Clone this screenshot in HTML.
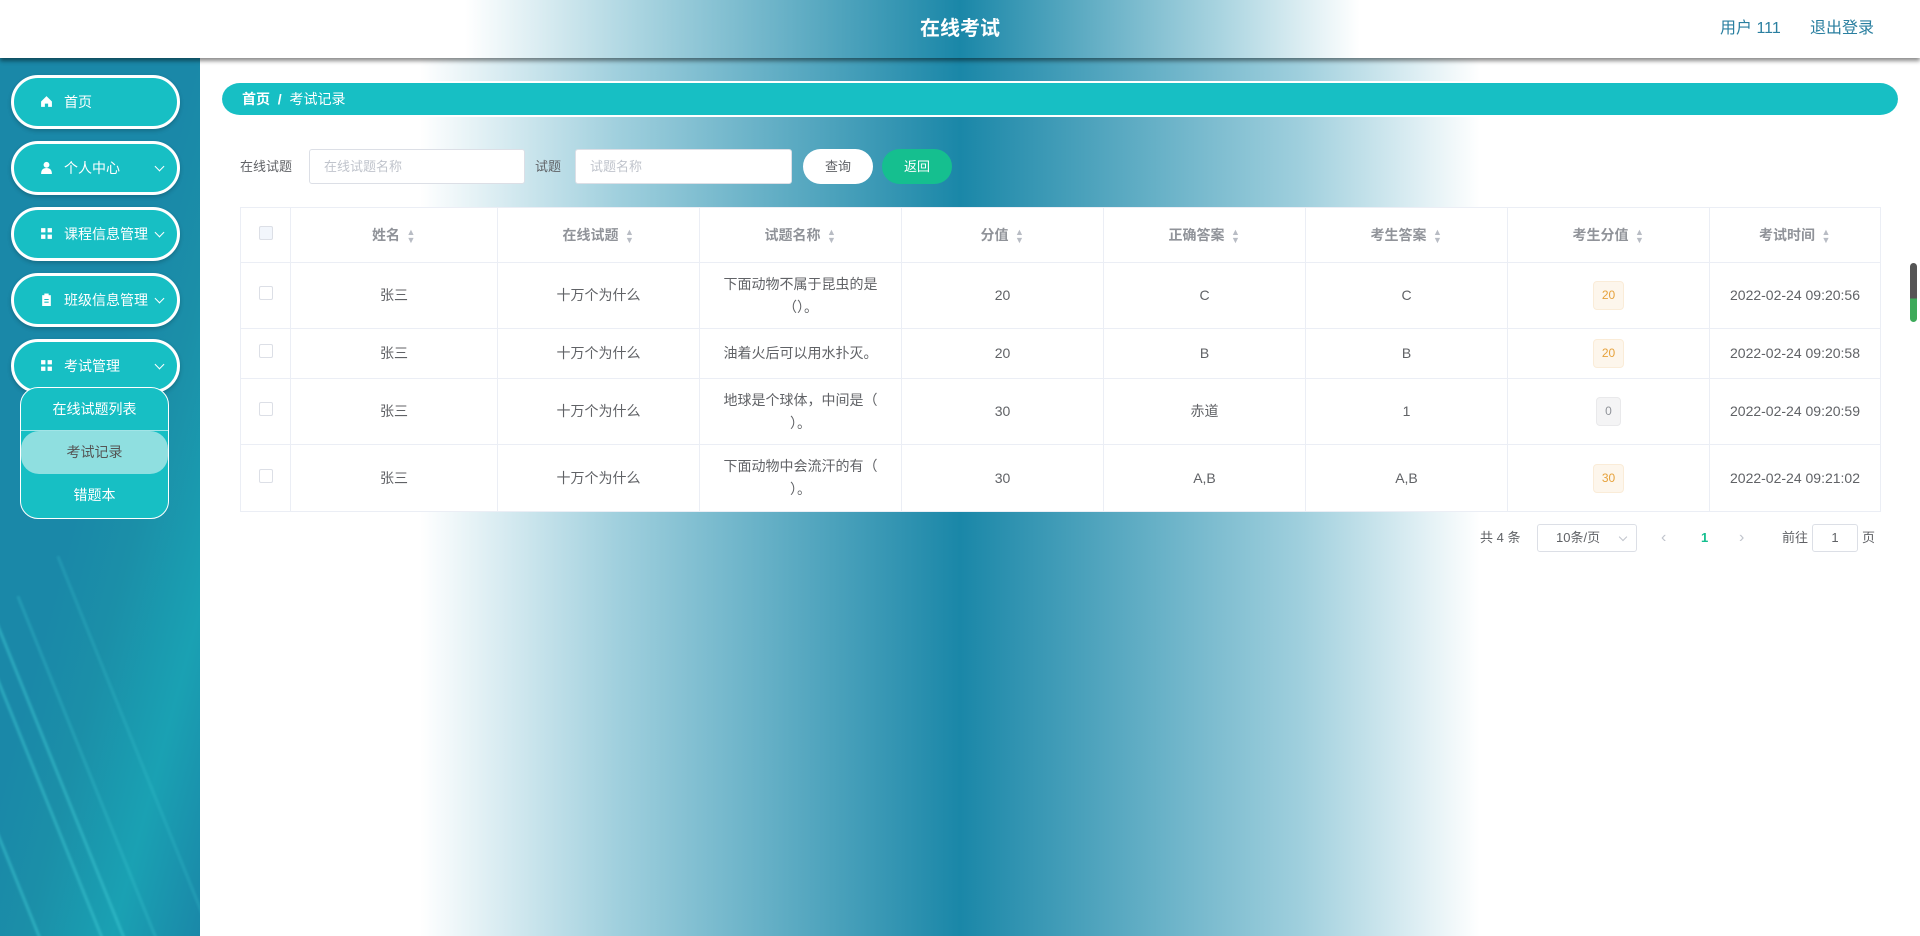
<!DOCTYPE html>
<html><head><meta charset="utf-8"><style>
*{box-sizing:border-box;margin:0;padding:0}
body{width:1920px;height:936px;overflow:hidden;font-family:"Liberation Sans","Noto Sans CJK SC",sans-serif;background:#fff;position:relative}
.grad{background:linear-gradient(to right,#fff 0,#fff 420px,#9fcfdd 620px,#1a87a8 960px,#9fcfdd 1300px,#fff 1480px,#fff 1920px)}
.hgrad{background:linear-gradient(to right,#fff 0,#fff 465px,#a9d4e0 640px,#1a87a8 960px,#a9d4e0 1220px,#fff 1360px,#fff 1920px)}
.header{position:absolute;left:0;top:0;width:1920px;height:58px;box-shadow:0 3px 4px rgba(0,0,0,.45);z-index:5}
.header .t{position:absolute;left:0;width:1920px;top:0;line-height:58px;text-align:center;color:#fff;font-weight:bold;font-size:20px}
.header .u{position:absolute;top:0;line-height:58px;color:#2a7fa0;font-size:16px}
.bg{position:absolute;left:0;top:58px;width:1920px;height:878px}
.side{position:absolute;left:0;top:58px;width:200px;height:878px;background:linear-gradient(105deg,#1a88a8 0,#1a88a8 45%,#1b8fa8 60%,#1aa1b3 80%,#1a88a8 100%);overflow:hidden}
.streak{position:absolute;width:3px;height:500px;background:rgba(60,200,210,.5);transform:rotate(-22deg);filter:blur(1px)}
.mi{position:absolute;left:11px;width:169px;height:54px;border:3px solid #fff;border-radius:28px;background:#17bfc4;color:#fff;font-size:14px;line-height:48px;padding-left:50px;box-shadow:0 2px 4px rgba(0,0,0,.2)}
.mi .ic{position:absolute;left:26px;top:17px;width:13px;height:13px}
.mi .ar{position:absolute;right:14px;top:19px;width:7px;height:7px;border-right:1.5px solid #fff;border-bottom:1.5px solid #fff;transform:rotate(45deg)}
.sub{position:absolute;left:20px;top:387px;width:149px;height:132px;background:#17bfc4;border:1px solid #fff;border-radius:18px;overflow:hidden;color:#fff;font-size:14px;text-align:center}
.sub div{height:43px;line-height:43px}
.crumb{position:absolute;left:222px;top:81px;width:1676px;height:36px;background:#17bfc4;border-radius:18px;border-top:2px solid #fff;border-bottom:2px solid #fff;color:#fff;font-weight:bold;font-size:14px;line-height:32px;padding-left:20px}
.lbl{position:absolute;top:149px;line-height:35px;font-size:13px;color:#606266}
.inp{position:absolute;top:149px;height:35px;background:#fff;border:1px solid #dcdfe6;border-radius:3px;font-size:13px;color:#c0c4cc;line-height:33px;padding-left:14px}
.btn{position:absolute;top:149px;height:35px;width:70px;border-radius:18px;font-size:13px;line-height:35px;text-align:center}
table{position:absolute;left:240px;top:207px;width:1640px;border-collapse:collapse;background:#fff;font-size:14px;color:#606266;table-layout:fixed}
td,th{border:1px solid #ebeef5;text-align:center;padding:0 12px;line-height:23px}
td.q{padding:0 22px}
th{height:55px;color:#909399;font-weight:bold;font-size:14px}
.s{display:inline-block;width:10px;vertical-align:middle;margin-left:6px;color:#b8bcc4;font-size:9px;line-height:8px}
.cb{display:inline-block;width:14px;height:14px;border:1px solid #dcdfe6;border-radius:2px;background:#fff}
.tag{display:inline-block;padding:0 8px;height:29px;line-height:27px;border-radius:4px;font-size:12px;background:#fdf6ec;border:1px solid #faecd8;color:#e6a23c}
.tag.g{background:#f4f4f5;border-color:#e9e9eb;color:#909399}
.pg{position:absolute;top:524px;line-height:28px;font-size:13px;color:#606266}
</style></head><body>
<div class="bg grad"></div>
<div class="header hgrad"><div class="t">在线考试</div><div class="u" style="left:1720px">用户 111</div><div class="u" style="left:1810px">退出登录</div></div>
<div class="side">
<div class="streak" style="left:40px;top:480px"></div><div class="streak" style="left:70px;top:500px"></div><div class="streak" style="left:110px;top:520px;opacity:.6"></div><div class="streak" style="left:10px;top:560px"></div><div class="streak" style="left:150px;top:480px;opacity:.5"></div><div class="streak" style="left:-20px;top:600px"></div>
</div>
<div class="mi" style="top:75px"><svg class="ic" viewBox="0 0 12 12"><path d="M6 1L1 6v5h3.5V8h3v3H11V6z" fill="#fff"/></svg>首页</div>
<div class="mi" style="top:141px"><svg class="ic" viewBox="0 0 12 12"><circle cx="6" cy="3.5" r="2.7" fill="#fff"/><path d="M1 12c0-4 2-5.5 5-5.5S11 8 11 12z" fill="#fff"/></svg>个人中心<span class="ar"></span></div>
<div class="mi" style="top:207px"><svg class="ic" viewBox="0 0 12 12"><path d="M1 1h4v4H1zM7 1h4v4H7zM1 7h4v4H1zM7 7h4v4H7z" fill="#fff"/></svg>课程信息管理<span class="ar"></span></div>
<div class="mi" style="top:273px"><svg class="ic" viewBox="0 0 12 12"><path d="M2 2h8v10H2z" fill="#fff"/><path d="M4 0.5h4v2.5H4z" fill="#fff"/><path d="M4 6h4M4 8.5h4" stroke="#17bfc4"/></svg>班级信息管理<span class="ar"></span></div>
<div class="mi" style="top:339px"><svg class="ic" viewBox="0 0 12 12"><path d="M1 1h4v4H1zM7 1h4v4H7zM1 7h4v4H1zM7 7h4v4H7z" fill="#fff"/></svg>考试管理<span class="ar"></span></div>
<div class="sub"><div style="border-bottom:1px solid rgba(255,255,255,.6)">在线试题列表</div><div style="background:#8fdfe0;color:#555;border-radius:18px">考试记录</div><div>错题本</div></div>
<div class="crumb">首页 &nbsp;/&nbsp; <span style="font-weight:normal">考试记录</span></div>
<div class="lbl" style="left:240px">在线试题</div>
<div class="inp" style="left:309px;width:216px">在线试题名称</div>
<div class="lbl" style="left:535px">试题</div>
<div class="inp" style="left:575px;width:217px">试题名称</div>
<div class="btn" style="left:803px;background:#fff;color:#606266">查询</div>
<div class="btn" style="left:882px;background:#15bf8f;color:#fff">返回</div>
<table>
<colgroup><col style="width:50px"><col style="width:207px"><col style="width:202px"><col style="width:202px"><col style="width:202px"><col style="width:202px"><col style="width:202px"><col style="width:202px"><col style="width:171px"></colgroup>
<tr><th><span class="cb" style="background:#f2f6fc"></span></th><th>姓名<span class="s">▲<br>▼</span></th><th>在线试题<span class="s">▲<br>▼</span></th><th>试题名称<span class="s">▲<br>▼</span></th><th>分值<span class="s">▲<br>▼</span></th><th>正确答案<span class="s">▲<br>▼</span></th><th>考生答案<span class="s">▲<br>▼</span></th><th>考生分值<span class="s">▲<br>▼</span></th><th>考试时间<span class="s">▲<br>▼</span></th></tr>
<tr style="height:66px"><td><span class="cb"></span></td><td>张三</td><td>十万个为什么</td><td class="q">下面动物不属于昆虫的是（）。</td><td>20</td><td>C</td><td>C</td><td><span class="tag">20</span></td><td style="padding:0">2022-02-24 09:20:56</td></tr>
<tr style="height:50px"><td><span class="cb"></span></td><td>张三</td><td>十万个为什么</td><td class="q">油着火后可以用水扑灭。</td><td>20</td><td>B</td><td>B</td><td><span class="tag">20</span></td><td style="padding:0">2022-02-24 09:20:58</td></tr>
<tr style="height:66px"><td><span class="cb"></span></td><td>张三</td><td>十万个为什么</td><td class="q">地球是个球体，中间是（<br>）。</td><td>30</td><td>赤道</td><td>1</td><td><span class="tag g">0</span></td><td style="padding:0">2022-02-24 09:20:59</td></tr>
<tr style="height:67px"><td><span class="cb"></span></td><td>张三</td><td>十万个为什么</td><td class="q">下面动物中会流汗的有（<br>）。</td><td>30</td><td>A,B</td><td>A,B</td><td><span class="tag">30</span></td><td style="padding:0">2022-02-24 09:21:02</td></tr>
</table>
<div class="pg" style="left:1480px">共 4 条</div>
<div class="pg" style="left:1537px;width:100px;height:28px;border:1px solid #dcdfe6;border-radius:3px;padding-left:18px;line-height:26px">10条/页<span style="position:absolute;right:10px;top:9px;width:6px;height:6px;border-right:1px solid #c0c4cc;border-bottom:1px solid #c0c4cc;transform:rotate(45deg)"></span></div>
<div class="pg" style="left:1661px;color:#c0c4cc;font-size:16px">‹</div>
<div class="pg" style="left:1701px;color:#15bf8f;font-weight:bold">1</div>
<div class="pg" style="left:1739px;color:#c0c4cc;font-size:16px">›</div>
<div class="pg" style="left:1782px">前往</div>
<div class="pg" style="left:1812px;width:46px;height:28px;border:1px solid #dcdfe6;border-radius:3px;text-align:center;line-height:26px">1</div>
<div class="pg" style="left:1862px">页</div>
<div style="position:absolute;left:1910px;top:263px;width:7px;height:59px;border-radius:4px;background:linear-gradient(#555 0,#555 60%,#3caa5a 60%,#3caa5a 100%)"></div>
</body></html>
